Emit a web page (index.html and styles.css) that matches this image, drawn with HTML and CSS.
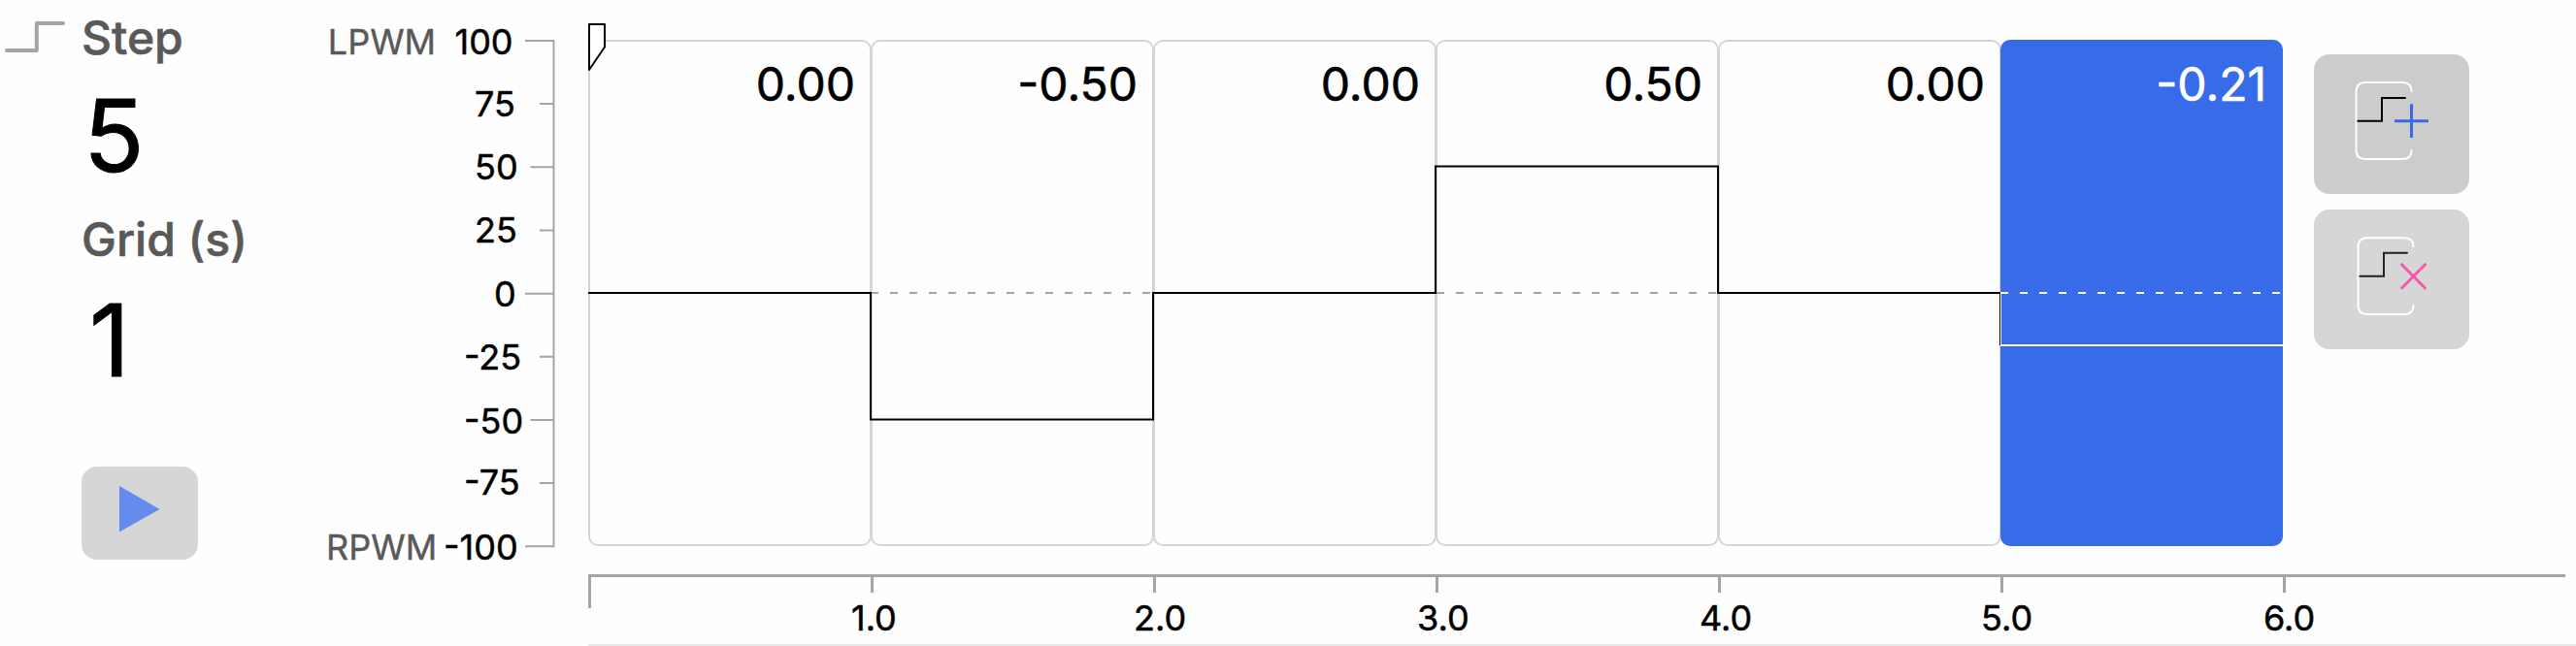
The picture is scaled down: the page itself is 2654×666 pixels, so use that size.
FILE: index.html
```
<!DOCTYPE html>
<html lang="en">
<head>
    <meta charset="UTF-8">
    <meta name="viewport" content="width=device-width, initial-scale=1.0">
    <title>Step PWM Editor</title>
    <link rel="stylesheet" href="styles.css">
</head>
<body>
    <div class="editor">
        <div class="icon-col">
            <svg width="84" height="80" viewBox="0 0 84 80">
                <path d="M7 52H37.8V24H65" fill="none" stroke="#a5a5a5" stroke-width="4" stroke-linecap="round" stroke-linejoin="round"/>
            </svg>
        </div>
        <div class="settings">
            <div class="label">Step</div>
            <div class="number">5</div>
            <div class="label label-grid">Grid (s)</div>
            <div class="number number-grid">1</div>
            <button class="play" aria-label="Play">
                <svg width="120" height="96" viewBox="0 0 120 96">
                    <path d="M39 20L80.500 44L39 67.500Z" fill="#668bee"/>
                </svg>
            </button>
        </div>
        <svg class="y-axis" width="276" height="590" viewBox="330 0 276 590">
            <g class="axis-line">
                <path d="M541 42H570.500V563.300H541"/>
                <path d="M556 107H570M546.500 172.300H570M556 237.500H570M541 302.700H570M556 367.700H570M546.500 433H570M556 498H570"/>
            </g>
            <g class="channel">
                <text x="337.800" y="56">LPWM</text>
                <text x="336" y="577">RPWM</text>
            </g>
            <g class="tick-text">
                <text x="468.500" y="56">100</text>
                <text x="489" y="119.500">75</text>
                <text x="489" y="184.500">50</text>
                <text x="489" y="249.500">25</text>
                <text x="509" y="315.500">0</text>
                <text x="478" y="381">-25</text>
                <text x="478" y="446.500">-50</text>
                <text x="478" y="509.500">-75</text>
                <text x="457" y="577">-100</text>
            </g>
        </svg>
        <div class="chart">
            <div class="plot">
                <div class="cell">0.00</div>
                <div class="cell">-0.50</div>
                <div class="cell">0.00</div>
                <div class="cell">0.50</div>
                <div class="cell">0.00</div>
                <div class="cell selected">-0.21</div>
                <svg class="wave" width="1748" height="592" viewBox="606 0 1748 592">
                    <path class="zero" d="M897 302H1188M1480 302H1771"/>
                    <path class="zero zero-selected" d="M2061 302H2352"/>
                    <path class="signal" d="M606 302H897V432.500H1188V302H1479V171.500H1770V302H2061"/>
                    <path d="M2060.500 302V356" stroke="#000" stroke-width="1"/>
                    <path d="M2061.500 303V356" stroke="#fff" stroke-width="1"/>
                    <path d="M2061 356H2352" stroke="#fff" stroke-width="2"/>
                    <path class="cursor" d="M607 25H623V48.500L607 72Z"/>
                </svg>
            </div>
            <svg class="x-axis" width="2048" height="74" viewBox="606 592 2048 74">
                <path d="M606 593.500H2643M607.500 592V627M898.500 595V611M1189.500 595V611M1480.500 595V611M1771.500 595V611M2062.500 595V611M2353.500 595V611" fill="none" stroke="#a5a5a5" stroke-width="3"/>
                <path d="M606 665H2654" stroke="#e8e8e8" stroke-width="2"/>
                <g class="tick-text">
                    <text x="877" y="649.500">1.0</text>
                    <text x="1168" y="649.500">2.0</text>
                    <text x="1460" y="649.500">3.0</text>
                    <text x="1751" y="649.500">4.0</text>
                    <text x="2041" y="649.500">5.0</text>
                    <text x="2332" y="649.500">6.0</text>
                </g>
            </svg>
            <div class="actions">
                <button class="action add" aria-label="Add step">
                    <svg width="160" height="144" viewBox="0 0 160 144">
                        <path d="M100.500 38Q100.500 29 91 29H53Q43.500 29 43.500 39V98.500Q43.500 108 53 108H91Q100.500 108 100.500 99" stroke="#fff"/>
                        <path d="M45.300 68.700H70V45H94" stroke="#000"/>
                        <path d="M83 68.700H118M100.500 51.300V86" stroke="#386be8" stroke-width="3" stroke-linecap="butt"/>
                    </svg>
                </button>
                <button class="action" aria-label="Delete step">
                    <svg width="160" height="144" viewBox="0 0 160 144">
                        <path d="M102.500 38.300Q102.500 29.300 93 29.300H55Q45.500 29.300 45.500 39V98.500Q45.500 108 55 108H93Q102.500 108 102.500 99" stroke="#fff"/>
                        <path d="M47.300 68.700H72V44.700H96" stroke="#222"/>
                        <path d="M90.500 56.700L114.500 81M114.500 56.700L90.500 81" stroke="#f957a8" stroke-width="3"/>
                    </svg>
                </button>
            </div>
        </div>
    </div>
</body>
</html>
```

FILE: styles.css
```
body {
    margin: 0;
    background: #fefefe;
    font-family: Inter, "Liberation Sans", sans-serif;
    font-optical-sizing: none;
    color: #000;
}
.editor {
    display: grid;
    grid-template-columns: 84px 246px 276px 2048px;
    height: 666px;
    overflow: hidden;
}
button {
    display: block;
    padding: 0;
    border: 0;
    border-radius: 16px;
    background: #d6d6d6;
}
svg {
    display: block;
}
.label {
    padding-top: 9px;
    font-size: 48px;
    line-height: 60px;
    font-weight: 500;
    -webkit-text-stroke: 0.6px #595959;
    color: #595959;
}
.number {
    padding-left: 2px;
    height: 139px;
    font-size: 103px;
    line-height: 142px;
    -webkit-text-stroke: 1px #000;
}
.number-grid {
    padding-left: 8px;
    height: 204px;
    line-height: 148px;
}
.play {
    width: 120px;
    height: 96px;
}
.axis-line {
    fill: none;
    stroke: #a5a5a5;
    stroke-width: 2;
}
.channel {
    font-size: 36px;
    fill: #595959;
    stroke: #595959;
    stroke-width: 0.4px;
}
.tick-text {
    font-size: 36px;
    stroke: #000;
    stroke-width: 0.5px;
}
.chart {
    display: grid;
    grid-template-columns: 1778px 270px;
    grid-template-rows: 592px 74px;
}
.plot {
    position: relative;
    display: flex;
    padding-top: 41px;
}
.cell {
    box-sizing: border-box;
    width: 292px;
    height: 522px;
    margin-right: -1px;
    padding: 14px 15px 0 0;
    border: 2px solid #d5d5d5;
    border-radius: 10px;
    font-size: 48px;
    line-height: 60px;
    text-align: right;
    -webkit-text-stroke: 0.6px;
}
.selected {
    width: 291px;
    border-color: #386be8;
    background: #386be8;
    color: #fff;
}
.wave {
    position: absolute;
    left: 0;
    top: 0;
    fill: none;
}
.zero {
    stroke: #a5a5a5;
    stroke-width: 2;
    stroke-dasharray: 8 12;
}
.zero-selected {
    stroke: #fff;
}
.signal {
    stroke: #000;
    stroke-width: 2;
}
.cursor {
    fill: #fff;
    stroke: #000;
    stroke-width: 2;
    stroke-linejoin: round;
}
.x-axis {
    grid-row: 2;
    grid-column: 1 / 3;
}
.actions {
    grid-row: 1;
    grid-column: 2;
    display: flex;
    flex-direction: column;
    gap: 16px;
    padding-top: 56px;
}
.action {
    width: 160px;
    height: 144px;
}
.action svg {
    fill: none;
    stroke-width: 2;
    stroke-linecap: round;
}
.add {
    background: #ccc;
}
```
